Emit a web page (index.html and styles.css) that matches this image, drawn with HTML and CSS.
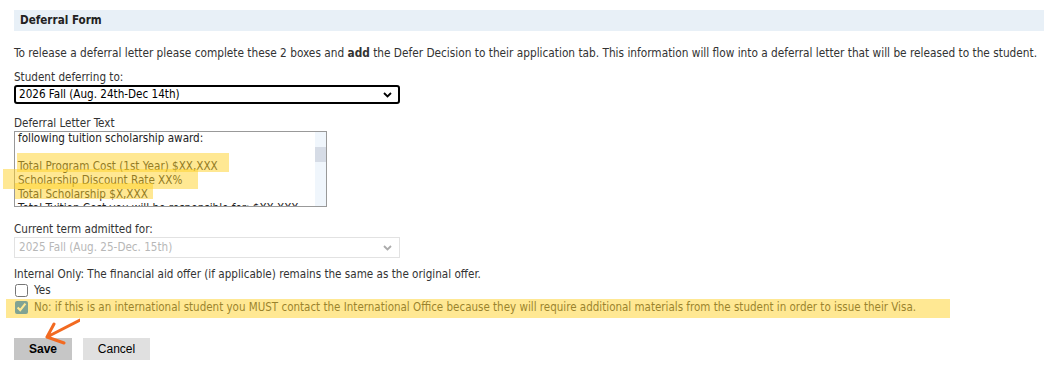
FILE: index.html
```html
<!DOCTYPE html>
<html lang="en">
<head>
  <meta charset="UTF-8" />
  <title>Deferral Form</title>
  <link rel="stylesheet" href="styles.css">
</head>
<body>
  <div class="page">
    <div class="panel-title">Deferral Form</div>

    <p class="intro">To release a deferral letter please complete these 2 boxes and <b>add</b> the Defer Decision to their application tab. This information will flow into a deferral letter that will be released to the student.</p>

    <label class="field-label" for="deferTo">Student deferring to:</label>
    <select id="deferTo" class="select focused">
      <option>2026 Fall (Aug. 24th-Dec 14th)</option>
    </select>

    <label class="field-label gap-top">Deferral Letter Text</label>
    <div class="letter-wrap">
      <div class="letter">
        <div class="letter-text">
          <div>following tuition scholarship award:</div>
          <div>&nbsp;</div>
          <div>Total Program Cost (1st Year) $XX,XXX</div>
          <div>Scholarship Discount Rate XX%</div>
          <div>Total Scholarship $X,XXX</div>
          <div>Total Tuition Cost you will be responsible for: $XX,XXX</div>
        </div>
        <div class="scrollbar"><div class="thumb"></div></div>
      </div>
      <!-- reviewer highlights -->
      <span class="mark mark-1"></span>
      <span class="mark mark-2"></span>
      <span class="mark mark-3"></span>
    </div>

    <label class="field-label gap-top-lg">Current term admitted for:</label>
    <select class="select" disabled>
      <option>2025 Fall (Aug. 25-Dec. 15th)</option>
    </select>

    <div class="internal">Internal Only: The financial aid offer (if applicable) remains the same as the original offer.</div>
    <label class="option"><input type="checkbox"> Yes</label>
    <div class="option-wrap">
      <label class="option option-no"><input type="checkbox" checked> No: if this is an international student you MUST contact the International Office because they will require additional materials from the student in order to issue their Visa.</label>
      <span class="mark mark-row"></span>
      <svg class="pointer" width="60" height="34" viewBox="0 0 60 34">
        <path d="M60 3 L27 20 M27 20 L34 7 M27 20 L44 26" fill="none" stroke="#f26a21" stroke-width="3" stroke-linecap="round" stroke-linejoin="round"/>
      </svg>
    </div>

    <div class="actions">
      <button class="btn btn-save">Save</button>
      <button class="btn">Cancel</button>
    </div>
  </div>
</body>
</html>
```
FILE: styles.css
```css
* {
  box-sizing: border-box;
}

body {
  margin: 0;
  background: #fff;
  color: #333;
  font-family: 'DejaVu Sans Condensed', 'Liberation Sans', sans-serif;
  font-size: 11.6px;
  line-height: 15px;
}

.page {
  padding: 10px 0 0 14px;
}

.panel-title {
  background: #e8f0f7;
  height: 21px;
  padding: 3px 6px;
  font-weight: bold;
  color: #222;
}

.intro {
  margin: 15px 0 0;
  font-size: 11.75px;
  white-space: nowrap;
}

.field-label {
  display: block;
  margin-top: 9px;
}

.gap-top {
  margin-top: 12px;
}

.gap-top-lg {
  margin-top: 15px;
}

.select {
  display: block;
  width: 386px;
  height: 19px;
  margin: 0;
  padding: 0 0 0 4px;
  font: inherit;
  color: #000;
  background: #fff;
  border: 1px solid #d6d6d6;
  border-radius: 0;
  appearance: none;
  background-image: url("data:image/svg+xml,%3Csvg xmlns='http://www.w3.org/2000/svg' width='9' height='6' viewBox='0 0 9 6'%3E%3Cpath d='M1 1l3.5 3.5L8 1' fill='none' stroke='%23000' stroke-width='1.8'/%3E%3C/svg%3E");
  background-repeat: no-repeat;
  background-position: right 6px center;
}

.select.focused {
  border: 2px solid #000;
  border-radius: 3px;
  padding-left: 3px;
}

.select:disabled {
  height: 21px;
  color: #9a9a9a;
  background-image: url("data:image/svg+xml,%3Csvg xmlns='http://www.w3.org/2000/svg' width='9' height='6' viewBox='0 0 9 6'%3E%3Cpath d='M1 1l3.5 3.5L8 1' fill='none' stroke='%23888' stroke-width='1.8'/%3E%3C/svg%3E");
  background-position: right 7px center;
}

.letter-wrap {
  position: relative;
}

.letter {
  display: flex;
  width: 313px;
  height: 76px;
  border: 1px solid #999;
  overflow: hidden;
  background: #fff;
}

.letter-text {
  flex: 1;
  padding: 0 3px;
  margin-top: -1px;
  line-height: 14px;
  color: #222;
  white-space: nowrap;
  overflow: hidden;
}

.scrollbar {
  width: 11px;
  background: #f0f6fc;
  padding-top: 15px;
}

.thumb {
  height: 15px;
  background: #d6dce6;
}

.mark {
  position: absolute;
  background: rgba(255, 210, 40, 0.5);
  pointer-events: none;
}

.mark-1 {
  left: 3px;
  top: 22px;
  width: 212px;
  height: 19px;
}

.mark-2 {
  left: -11px;
  top: 38px;
  width: 195px;
  height: 20px;
}

.mark-3 {
  left: 1px;
  top: 52px;
  width: 138px;
  height: 16px;
}

.internal {
  margin-top: 9px;
}

.option-wrap {
  position: relative;
}

.option {
  display: flex;
  align-items: center;
  gap: 6px;
  height: 17px;
}

.option-no {
  font-size: 11.5px;
  white-space: nowrap;
}

.option input {
  width: 13px;
  height: 13px;
  margin: 0 0 0 1px;
}

.mark-row {
  left: -8px;
  top: 0;
  width: 944px;
  height: 19px;
}

.pointer {
  position: absolute;
  left: 6px;
  top: 18px;
}

.actions {
  display: flex;
  gap: 11px;
  margin-top: 22px;
}

.btn {
  height: 22px;
  width: 67px;
  border: none;
  background: #e0e0e0;
  color: #000;
  font-family: 'Liberation Sans', Arial, sans-serif;
  font-size: 12px;
  padding: 0;
}

.btn-save {
  width: 58px;
  background: #c6c6c6;
  font-weight: bold;
}
```
